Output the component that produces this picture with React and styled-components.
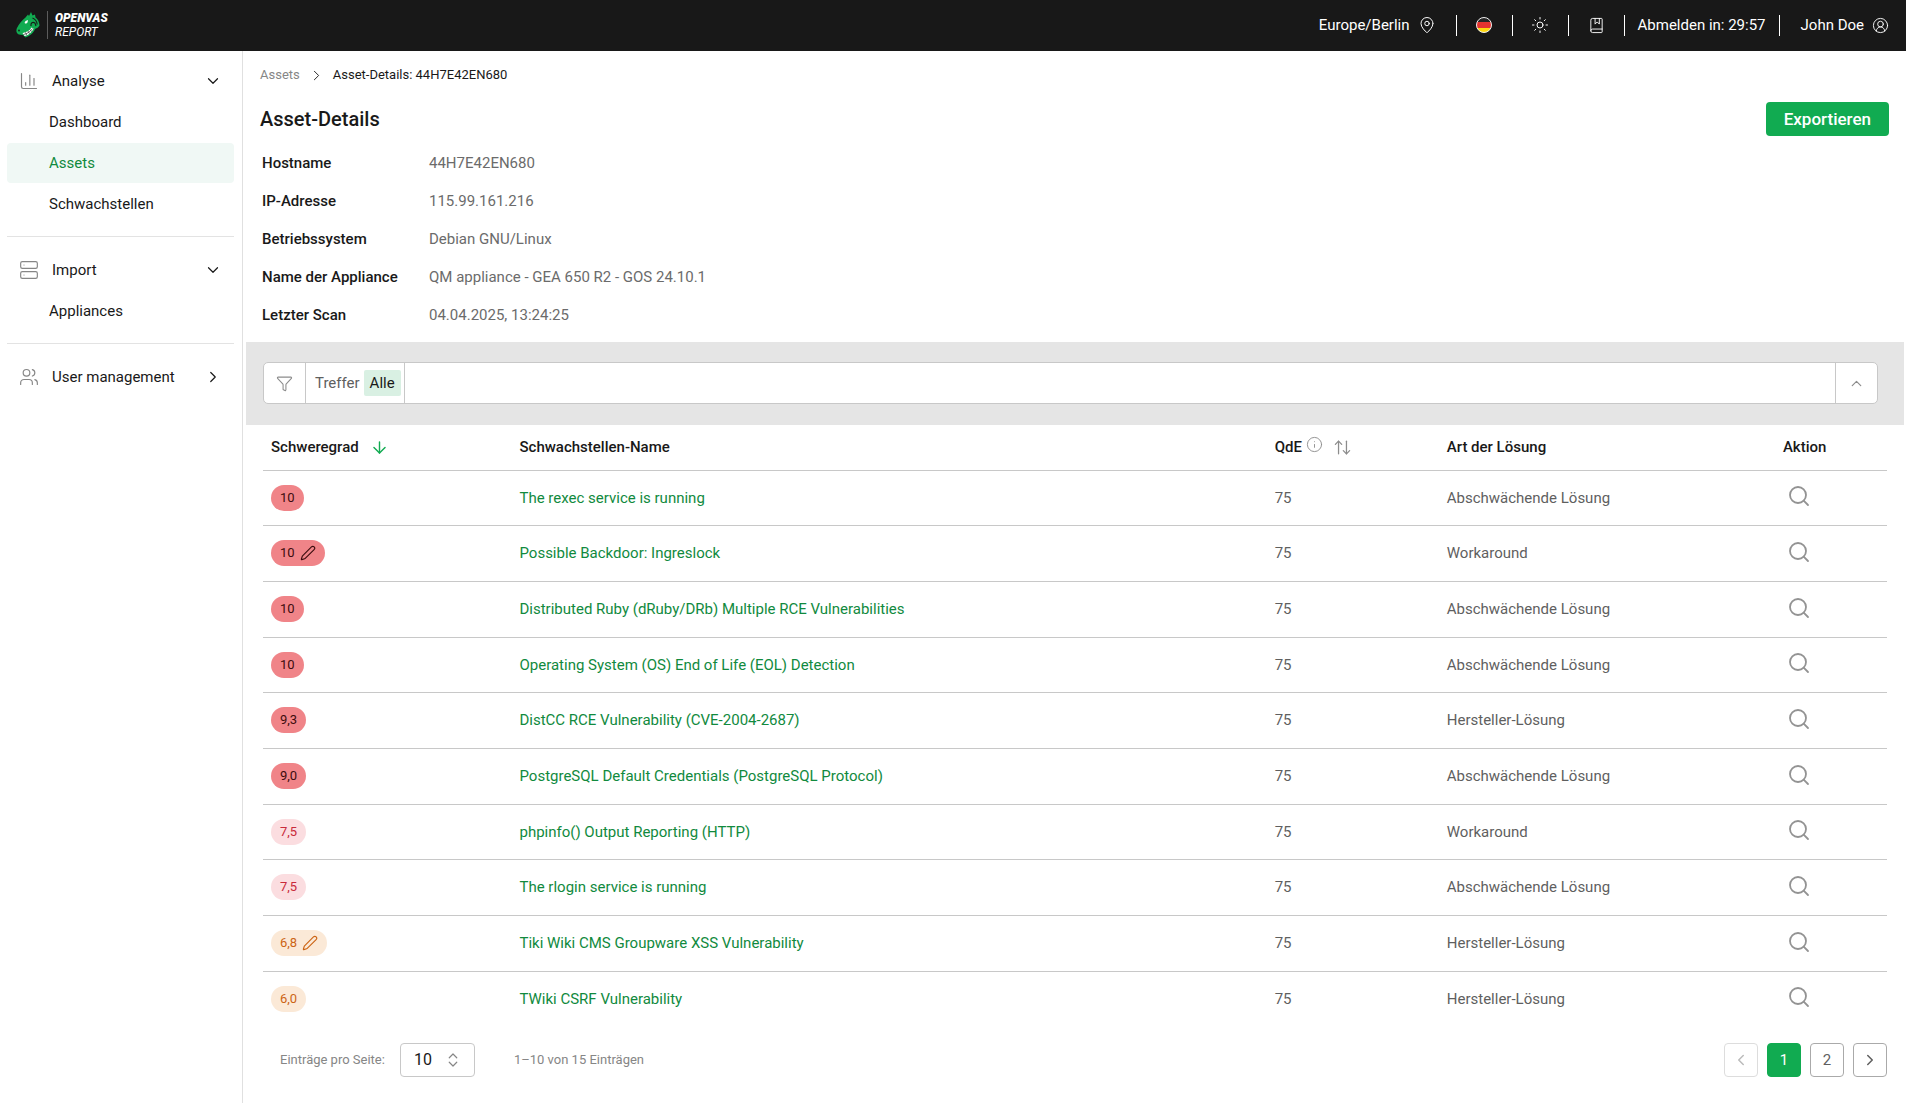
import { createGlobalStyle, styled } from "styled-components"
import {
    ArrowDown,
    ArrowUpDown,
    BookMarked,
    ChartColumn,
    ChevronDown,
    ChevronLeft,
    ChevronRight,
    ChevronUp,
    ChevronsUpDown,
    CircleUserRound,
    Funnel,
    Info,
    MapPin,
    Pen,
    Search,
    Server,
    Sun,
    Users,
} from "lucide-react"

const GlobalStyle = createGlobalStyle`
    * {
        box-sizing: border-box;
    }
    body {
        margin: 0;
        background-color: white;
        color: #191919;
        font-family: Roboto, "Liberation Sans", sans-serif;
        font-size: 15px;
        line-height: 24px;
    }
    button, select {
        font: inherit;
        color: inherit;
        cursor: pointer;
    }
    a {
        color: inherit;
        text-decoration: none;
    }
    svg {
        flex-shrink: 0;
    }
`

const Page = styled.div`
    display: flex;
    flex-direction: column;
    min-height: 100vh;
`

/* header */
const Header = styled.header`
    display: flex;
    align-items: center;
    justify-content: space-between;
    height: 51px;
    padding: 0 17px 1px 16px;
    background-color: #181818;
    color: white;
`
const Brand = styled.a`
    display: flex;
    align-items: center;
    gap: 7px;
`
const BrandText = styled.span`
    display: flex;
    flex-direction: column;
    padding-left: 7px;
    border-left: 1px solid #5c5c5c;
    font-size: 12px;
    font-style: italic;
    line-height: 14px;
`
const BrandName = styled.strong`
    font-weight: 900;
`
const HeaderMenu = styled.div`
    display: flex;
    align-items: center;
`
const HeaderButton = styled.button`
    display: flex;
    align-items: center;
    justify-content: center;
    gap: 8px;
    height: 21px;
    min-width: ${(props) => (props.$icon ? "56px" : "0")};
    padding: ${(props) => props.$pad || "0"};
    border: none;
    border-left: ${(props) => (props.$first ? "none" : "1px solid white")};
    background: none;
    white-space: nowrap;
`

/* sidebar */
const Body = styled.div`
    display: flex;
    flex: 1;
`
const Sidebar = styled.nav`
    flex: none;
    width: 243px;
    padding: 10px 8px 0 7px;
    border-right: 1px solid #e0e0e0;
`
const NavGroup = styled.div`
    display: flex;
    flex-direction: column;
    gap: 1px;
    padding-bottom: 12px;
    margin-bottom: 13px;
    border-bottom: ${(props) => (props.$last ? "none" : "1px solid #e3e3e3")};
`
const NavHeading = styled.button`
    display: flex;
    align-items: center;
    gap: 13px;
    height: 40px;
    padding: 0 12px;
    border: none;
    background: none;
    text-align: left;
    > svg:first-child {
        color: #868686;
    }
    > span {
        flex: 1;
    }
`
const NavLink = styled.a`
    display: flex;
    align-items: center;
    height: 40px;
    padding-left: 42px;
    border-radius: 4px;
    background-color: ${(props) => (props.$active ? "#f0f8f5" : "transparent")};
    color: ${(props) => (props.$active ? "#118a3e" : "#191919")};
`

/* content */
const Main = styled.main`
    flex: 1;
    min-width: 0;
    padding: 12px 2px 0 3px;
`
const Breadcrumbs = styled.nav`
    display: flex;
    align-items: center;
    gap: 8px;
    padding: 0 15px 0 14px;
    font-size: 13px;
    a {
        color: #868686;
    }
`
const TitleRow = styled.div`
    display: flex;
    align-items: center;
    justify-content: space-between;
    padding: 15px 15px 9px 14px;
`
const Title = styled.h1`
    margin: 0;
    font-size: 20px;
    font-weight: 500;
`
const ExportButton = styled.button`
    height: 34px;
    padding: 0 18px;
    border: none;
    border-radius: 4px;
    background-color: #11ab51;
    color: white;
    font-size: 17px;
    font-weight: 500;
`
const Details = styled.dl`
    display: grid;
    grid-template-columns: 167px 1fr;
    row-gap: 14px;
    margin: 0;
    padding: 6px 16px 15px;
`
const Term = styled.dt`
    font-weight: 500;
`
const Value = styled.dd`
    margin: 0;
    color: #6b6b6b;
`
const FilterBand = styled.div`
    padding: 20px 26px 21px 17px;
    background-color: #e5e5e5;
`
const FilterBar = styled.div`
    display: flex;
    height: 42px;
    border: 1px solid #c8c8c8;
    border-radius: 5px;
    background-color: white;
    color: #8c8c8c;
`
const FilterButton = styled.button`
    display: flex;
    align-items: center;
    justify-content: center;
    width: 41px;
    padding: 0;
    border: none;
    background: none;
`
const FilterChip = styled.div`
    display: flex;
    align-items: center;
    gap: 4px;
    padding: 0 3px 0 9px;
    border: solid #c8c8c8;
    border-width: 0 1px;
    color: #5f5f5f;
`
const FilterValue = styled.span`
    padding: 1px 6px;
    border-radius: 2px;
    background-color: #d9f0e3;
    color: #191919;
`
const FilterRest = styled.div`
    flex: 1;
    border-right: 1px solid #c8c8c8;
`

/* table */
const TableArea = styled.div`
    padding: 0 17px;
`
const Table = styled.table`
    width: 100%;
    border-collapse: collapse;
    table-layout: fixed;
`
const HeadCell = styled.th`
    width: ${(props) => props.$width};
    height: 45px;
    padding: 0 8px;
    border-bottom: 1px solid #c8c8c8;
    font-weight: 500;
    text-align: left;
`
const HeadContent = styled.div`
    display: flex;
    align-items: center;
    gap: ${(props) => props.$gap || "11px"};
    svg {
        color: #8c8c8c;
    }
`
const InfoMark = styled.span`
    display: flex;
    padding-bottom: 5px;
    margin-right: 6px;
`
const SortButton = styled.button`
    display: flex;
    padding: 0;
    border: none;
    background: none;
    svg {
        color: ${(props) => (props.$active ? "#11ab51" : "#8c8c8c")};
    }
`
const Row = styled.tr`
    height: 56px;
    border-bottom: 1px solid #c8c8c8;
    &:nth-child(3n + 1) {
        height: 55px;
    }
    &:last-child {
        border-bottom: none;
    }
`
const Cell = styled.td`
    padding: 0 8px;
    color: #5f5f5f;
    a {
        color: #118a3e;
    }
`
const badgeColors = {
    critical: ["#f08488", "#3d0c0e"],
    high: ["#fbdde0", "#c92a3a"],
    medium: ["#fbe9d7", "#cc6414"],
}
const Badge = styled.span`
    display: inline-flex;
    align-items: center;
    gap: 5px;
    height: 26px;
    padding: 0 9px;
    border-radius: 13px;
    background-color: ${(props) => badgeColors[props.$level][0]};
    color: ${(props) => badgeColors[props.$level][1]};
    font-size: 13px;
    vertical-align: middle;
`
const ActionButton = styled.button`
    display: flex;
    padding: 0 4px 3px;
    border: none;
    background: none;
    color: #939393;
`

/* pagination */
const Footer = styled.div`
    display: flex;
    align-items: center;
    justify-content: space-between;
    padding: 17px 0 26px 17px;
    color: #868686;
    font-size: 13px;
`
const PageSize = styled.div`
    display: flex;
    align-items: center;
    gap: 15px;
`
const SelectBox = styled.div`
    position: relative;
    margin-right: 24px;
    svg {
        position: absolute;
        top: 8px;
        right: 13px;
        pointer-events: none;
    }
`
const Select = styled.select`
    width: 75px;
    height: 34px;
    padding: 0 13px;
    border: 1px solid #c8c8c8;
    border-radius: 4px;
    background-color: white;
    color: #191919;
    font-size: 16px;
    appearance: none;
`
const Pager = styled.nav`
    display: flex;
    gap: 9px;
`
const PageButton = styled.button`
    display: flex;
    align-items: center;
    justify-content: center;
    width: 34px;
    height: 34px;
    padding: 0;
    border: 1px solid ${(props) => (props.$active ? "#11ab51" : "#aaa")};
    border-radius: 4px;
    background-color: ${(props) => (props.$active ? "#11ab51" : "white")};
    color: ${(props) => (props.$active ? "white" : "#5f5f5f")};
    font-size: 15px;
    &:disabled {
        border-color: #ddd;
        color: #bbb;
    }
`

const rows = [
    { score: "10", level: "critical", name: "The rexec service is running", solution: "Abschwächende Lösung" },
    { score: "10", level: "critical", edited: true, name: "Possible Backdoor: Ingreslock", solution: "Workaround" },
    { score: "10", level: "critical", name: "Distributed Ruby (dRuby/DRb) Multiple RCE Vulnerabilities", solution: "Abschwächende Lösung" },
    { score: "10", level: "critical", name: "Operating System (OS) End of Life (EOL) Detection", solution: "Abschwächende Lösung" },
    { score: "9,3", level: "critical", name: "DistCC RCE Vulnerability (CVE-2004-2687)", solution: "Hersteller-Lösung" },
    { score: "9,0", level: "critical", name: "PostgreSQL Default Credentials (PostgreSQL Protocol)", solution: "Abschwächende Lösung" },
    { score: "7,5", level: "high", name: "phpinfo() Output Reporting (HTTP)", solution: "Workaround" },
    { score: "7,5", level: "high", name: "The rlogin service is running", solution: "Abschwächende Lösung" },
    { score: "6,8", level: "medium", edited: true, name: "Tiki Wiki CMS Groupware XSS Vulnerability", solution: "Hersteller-Lösung" },
    { score: "6,0", level: "medium", name: "TWiki CSRF Vulnerability", solution: "Hersteller-Lösung" },
]

const details = [
    ["Hostname", "44H7E42EN680"],
    ["IP-Adresse", "115.99.161.216"],
    ["Betriebssystem", "Debian GNU/Linux"],
    ["Name der Appliance", "QM appliance - GEA 650 R2 - GOS 24.10.1"],
    ["Letzter Scan", "04.04.2025, 13:24:25"],
]

function Logo() {
    return (
        <svg width="24" height="26" viewBox="0 0 24 26" aria-hidden="true">
            <path d="M13 4 15 0 16.500 3.500 19 2.500 19.500 5.500 C22 7 23.200 10 23.500 13.500 L22 15.500 19 17 C18 20.500 14 24 9.500 25.500 L7 23 3 22.500 C0 21.500 0 18 1 16 C3 12 6 8 9.500 5.500 L12 2.500Z" fill="#11ab51" />
            <path d="M8.500 11 9.500 9 12 8 11.500 10.500 10 11.800Z" fill="white" />
            <path d="M6.500 21 C10 20.500 14 18.500 15.500 15.500 L17.500 16.500 C16 20.500 12 23.500 8.500 24Z" fill="white" />
            <path d="M7.500 22.500 C11 22 14.500 19.500 16.500 16.500 M9.500 20.300 10.700 23.300 M12 19 13.500 21.800 M14 17.500 15.600 19.600" stroke="#181818" strokeWidth="0.600" fill="none" />
            <path d="M15 14 C14.500 11 16.500 9.500 19 11 L20 14 M16.500 6 C20 7.500 21 10 21.200 12.500" stroke="#181818" strokeWidth="1.100" fill="none" />
            <circle cx="3" cy="18.500" r="0.900" fill="#181818" />
        </svg>
    )
}

function GermanFlag() {
    return (
        <svg width="16" height="16" viewBox="0 0 16 16" aria-hidden="true">
            <clipPath id="flag">
                <circle cx="8" cy="8" r="7.500" />
            </clipPath>
            <g clipPath="url(#flag)">
                <rect width="16" height="16" fill="#262626" />
                <rect y="5" width="16" height="6" fill="#e5332f" />
                <rect y="11" width="16" height="5" fill="#ffd90f" />
            </g>
            <circle cx="8" cy="8" r="7.500" fill="none" stroke="#eee" strokeWidth="1" />
        </svg>
    )
}

export default function App() {
    return (
        <Page>
            <GlobalStyle />
            <Header>
                <Brand href="#">
                    <Logo />
                    <BrandText>
                        <BrandName>OPENVAS</BrandName>
                        REPORT
                    </BrandText>
                </Brand>
                <HeaderMenu>
                    <HeaderButton $first $pad="0 20px 0 0">
                        Europe/Berlin
                        <MapPin size={18} strokeWidth={1.3} />
                    </HeaderButton>
                    <HeaderButton $icon aria-label="Sprache">
                        <GermanFlag />
                    </HeaderButton>
                    <HeaderButton $icon aria-label="Design">
                        <Sun size={18} strokeWidth={1.3} />
                    </HeaderButton>
                    <HeaderButton $icon aria-label="Handbuch">
                        <BookMarked size={17} strokeWidth={1.3} />
                    </HeaderButton>
                    <HeaderButton $pad="0 13px">Abmelden in: 29:57</HeaderButton>
                    <HeaderButton $pad="0 0 0 21px">
                        John Doe
                        <CircleUserRound size={17} strokeWidth={1.3} />
                    </HeaderButton>
                </HeaderMenu>
            </Header>
            <Body>
                <Sidebar>
                    <NavGroup>
                        <NavHeading>
                            <ChartColumn size={20} strokeWidth={1.4} />
                            <span>Analyse</span>
                            <ChevronDown size={18} strokeWidth={1.6} />
                        </NavHeading>
                        <NavLink href="#">Dashboard</NavLink>
                        <NavLink href="#" $active>Assets</NavLink>
                        <NavLink href="#">Schwachstellen</NavLink>
                    </NavGroup>
                    <NavGroup>
                        <NavHeading>
                            <Server size={20} strokeWidth={1.4} />
                            <span>Import</span>
                            <ChevronDown size={18} strokeWidth={1.6} />
                        </NavHeading>
                        <NavLink href="#">Appliances</NavLink>
                    </NavGroup>
                    <NavGroup $last>
                        <NavHeading>
                            <Users size={20} strokeWidth={1.4} />
                            <span>User management</span>
                            <ChevronRight size={18} strokeWidth={1.6} />
                        </NavHeading>
                    </NavGroup>
                </Sidebar>
                <Main>
                    <Breadcrumbs>
                        <a href="#">Assets</a>
                        <ChevronRight size={17} strokeWidth={1.3} />
                        <span>Asset-Details: 44H7E42EN680</span>
                    </Breadcrumbs>
                    <TitleRow>
                        <Title>Asset-Details</Title>
                        <ExportButton>Exportieren</ExportButton>
                    </TitleRow>
                    <Details>
                        {details.map(([term, value]) => [
                            <Term key={term}>{term}</Term>,
                            <Value key={value}>{value}</Value>,
                        ])}
                    </Details>
                    <FilterBand>
                        <FilterBar>
                            <FilterButton aria-label="Filter">
                                <Funnel size={17} strokeWidth={1.5} />
                            </FilterButton>
                            <FilterChip>
                                Treffer
                                <FilterValue>Alle</FilterValue>
                            </FilterChip>
                            <FilterRest />
                            <FilterButton aria-label="Filter einklappen">
                                <ChevronUp size={17} strokeWidth={1.7} />
                            </FilterButton>
                        </FilterBar>
                    </FilterBand>
                    <TableArea>
                        <Table>
                            <thead>
                                <tr>
                                    <HeadCell $width="15.3%">
                                        <HeadContent>
                                            Schweregrad
                                            <SortButton $active aria-label="Nach Schweregrad sortieren">
                                                <ArrowDown size={19} strokeWidth={1.8} />
                                            </SortButton>
                                        </HeadContent>
                                    </HeadCell>
                                    <HeadCell $width="46.5%">Schwachstellen-Name</HeadCell>
                                    <HeadCell $width="10.6%">
                                        <HeadContent $gap="4px">
                                            QdE
                                            <InfoMark>
                                                <Info size={17} strokeWidth={1.3} />
                                            </InfoMark>
                                            <SortButton aria-label="Nach QdE sortieren">
                                                <ArrowUpDown size={19} strokeWidth={1.6} />
                                            </SortButton>
                                        </HeadContent>
                                    </HeadCell>
                                    <HeadCell $width="20.7%">Art der Lösung</HeadCell>
                                    <HeadCell $width="6.9%">Aktion</HeadCell>
                                </tr>
                            </thead>
                            <tbody>
                                {rows.map((row) => (
                                    <Row key={row.name}>
                                        <Cell>
                                            <Badge $level={row.level}>
                                                {row.score}
                                                {row.edited && <Pen size={16} strokeWidth={1.7} />}
                                            </Badge>
                                        </Cell>
                                        <Cell>
                                            <a href="#">{row.name}</a>
                                        </Cell>
                                        <Cell>75</Cell>
                                        <Cell>{row.solution}</Cell>
                                        <Cell>
                                            <ActionButton aria-label="Details anzeigen">
                                                <Search size={24} strokeWidth={1.8} />
                                            </ActionButton>
                                        </Cell>
                                    </Row>
                                ))}
                            </tbody>
                        </Table>
                        <Footer>
                            <PageSize>
                                <label htmlFor="page-size">Einträge pro Seite:</label>
                                <SelectBox>
                                    <Select id="page-size" defaultValue="10">
                                        <option>10</option>
                                        <option>20</option>
                                        <option>50</option>
                                    </Select>
                                    <ChevronsUpDown size={18} strokeWidth={1.6} />
                                </SelectBox>
                                <span>1–10 von 15 Einträgen</span>
                            </PageSize>
                            <Pager>
                                <PageButton disabled aria-label="Vorherige Seite">
                                    <ChevronLeft size={18} />
                                </PageButton>
                                <PageButton $active>1</PageButton>
                                <PageButton>2</PageButton>
                                <PageButton aria-label="Nächste Seite">
                                    <ChevronRight size={18} />
                                </PageButton>
                            </Pager>
                        </Footer>
                    </TableArea>
                </Main>
            </Body>
        </Page>
    )
}
